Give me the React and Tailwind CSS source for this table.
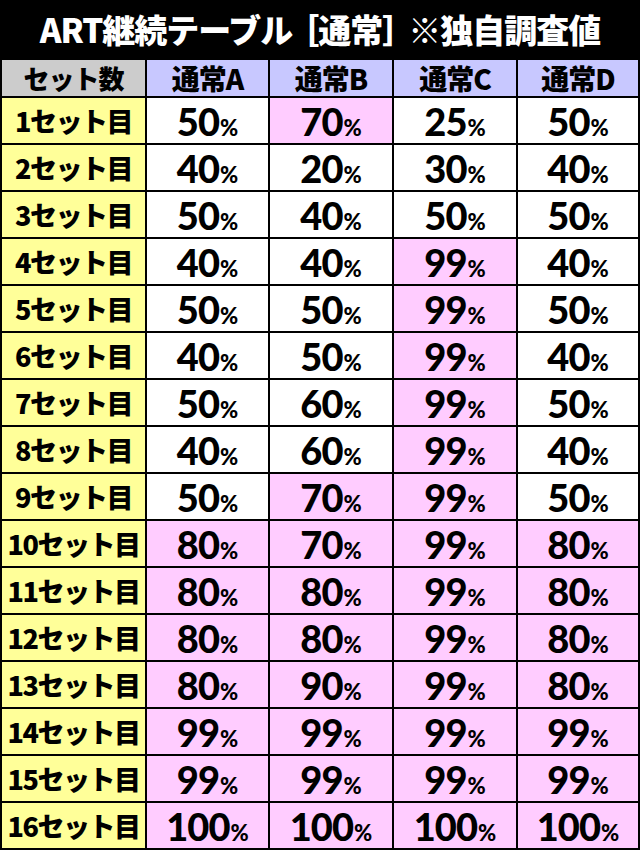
const rows = [
  [50, 70, 25, 50],
  [40, 20, 30, 40],
  [50, 40, 50, 50],
  [40, 40, 99, 40],
  [50, 50, 99, 50],
  [40, 50, 99, 40],
  [50, 60, 99, 50],
  [40, 60, 99, 40],
  [50, 70, 99, 50],
  [80, 70, 99, 80],
  [80, 80, 99, 80],
  [80, 80, 99, 80],
  [80, 90, 99, 80],
  [99, 99, 99, 99],
  [99, 99, 99, 99],
  [100, 100, 100, 100],
];

const font = { fontFamily: '"Noto Sans CJK JP", "Noto Sans", sans-serif' };
const digits = { fontFamily: 'Lato, "Noto Sans", sans-serif' };

function Pct({ value, pink }) {
  return (
    <div
      className={`flex items-center justify-center ${pink ? "bg-[#ffccff]" : "bg-white"}`}
    >
      <span className="flex items-baseline leading-none font-black text-black" style={digits}>
        <span className="text-[38px] tracking-[-1px]">{value}</span>
        <span className="text-[22px] ml-[1px]">%</span>
      </span>
    </div>
  );
}

export default function App() {
  return (
    <div className="w-[640px] h-[850px] bg-black overflow-hidden" style={font}>
      {/* Title */}
      <div className="h-[58px] flex items-center justify-center text-white font-black text-[33px] tracking-[-1px] leading-none">
        ART継続テーブル<span className="-mx-[6px]">［通常］</span> ※独自調査値
      </div>

      {/* Table */}
      <div className="grid grid-cols-[143px_121px_122px_122px_120px] grid-rows-[36px] auto-rows-[45px] gap-[2px] p-[2px]">
        <div className="bg-[#cccccc] flex items-center justify-center font-black text-[26px] leading-none tracking-[-1px]">
          セット数
        </div>
        {["通常A", "通常B", "通常C", "通常D"].map((h) => (
          <div
            key={h}
            className="bg-[#c8c8ff] flex items-center justify-center font-black text-[28px] leading-none tracking-[-1px]"
          >
            {h}
          </div>
        ))}

        {rows.map((r, i) => (
          <div key={i} className="contents">
            <div className="bg-[#ffff99] flex items-center justify-center font-black text-[27px] leading-none tracking-[-1.5px] whitespace-nowrap">
              {i + 1}セット目
            </div>
            {r.map((v, j) => {
              const pink =
                i >= 9 ||
                (j === 1 && (i === 0 || i === 8)) ||
                (j === 2 && i >= 3);
              return <Pct key={j} value={v} pink={pink} />;
            })}
          </div>
        ))}
      </div>
    </div>
  );
}
